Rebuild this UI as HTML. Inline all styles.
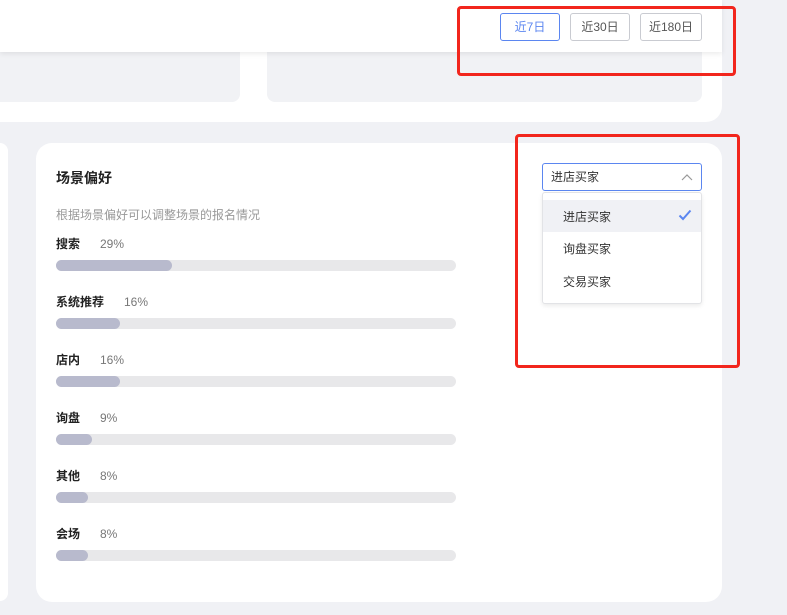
<!DOCTYPE html>
<html><head><meta charset="utf-8"><style>
*{margin:0;padding:0;box-sizing:border-box}
body{width:787px;height:615px;background:#f0f1f5;position:relative;overflow:hidden;font-family:"Liberation Sans","Noto Sans CJK SC",sans-serif;font-size:12px;color:#333}
.abs{position:absolute}
.card{background:#fff}
.btn{position:absolute;top:13px;height:28px;border:1px solid #c9cbd1;border-radius:3px;font-size:12px;line-height:26px;text-align:center;color:#555;background:#fff}
.lbl{position:absolute;left:56px;font-size:12px;font-weight:bold;color:#222;line-height:16px}
.pct{position:absolute;font-size:12px;color:#777;line-height:16px}
.track{position:absolute;left:56px;width:400px;height:11px;border-radius:6px;background:#e8e8ea}
.fill{height:11px;border-radius:6px;background:#b8bacd}
.red{position:absolute;border:3px solid #f2261d;border-radius:4px}
</style></head><body>
<div class="abs card" style="left:0;top:0;width:722px;height:122px;border-bottom-right-radius:16px"></div>
<div class="abs" style="left:0;top:40px;width:240px;height:62px;background:#f1f2f5;border-bottom-right-radius:8px"></div>
<div class="abs" style="left:267px;top:40px;width:435px;height:62px;background:#f1f2f5;border-radius:0 0 8px 8px"></div>
<div class="abs card" style="left:0;top:0;width:722px;height:52px;box-shadow:0 2px 5px rgba(0,0,0,.08)"></div>
<div class="btn" style="left:500px;width:60px;border-color:#5b86f0;color:#5b86f0">近7日</div>
<div class="btn" style="left:570px;width:60px">近30日</div>
<div class="btn" style="left:640px;width:62px">近180日</div>

<div class="abs card" style="left:0;top:143px;width:8px;height:458px;border-radius:0 12px 12px 0"></div>
<div class="abs card" style="left:36px;top:143px;width:686px;height:459px;border-radius:16px"></div>
<div class="abs" style="left:56px;top:168px;font-size:14px;font-weight:bold;color:#222">场景偏好</div>
<div class="abs" style="left:56px;top:206px;font-size:12px;color:#999">根据场景偏好可以调整场景的报名情况</div>

<div class="lbl" style="top:236px">搜索</div><div class="pct" style="left:100px;top:236px">29%</div>
<div class="track" style="top:260px"><div class="fill" style="width:116px"></div></div>
<div class="lbl" style="top:294px">系统推荐</div><div class="pct" style="left:124px;top:294px">16%</div>
<div class="track" style="top:318px"><div class="fill" style="width:64px"></div></div>
<div class="lbl" style="top:352px">店内</div><div class="pct" style="left:100px;top:352px">16%</div>
<div class="track" style="top:376px"><div class="fill" style="width:64px"></div></div>
<div class="lbl" style="top:410px">询盘</div><div class="pct" style="left:100px;top:410px">9%</div>
<div class="track" style="top:434px"><div class="fill" style="width:36px"></div></div>
<div class="lbl" style="top:468px">其他</div><div class="pct" style="left:100px;top:468px">8%</div>
<div class="track" style="top:492px"><div class="fill" style="width:32px"></div></div>
<div class="lbl" style="top:526px">会场</div><div class="pct" style="left:100px;top:526px">8%</div>
<div class="track" style="top:550px"><div class="fill" style="width:32px"></div></div>

<div class="abs" style="left:542px;top:163px;width:160px;height:28px;border:1px solid #5b86f0;border-radius:3px;background:#fff;line-height:26px;padding-left:8px;color:#333">进店买家
<svg class="abs" style="right:8px;top:9px" width="12" height="8" viewBox="0 0 12 8"><path d="M1 7L6 2L11 7" fill="none" stroke="#999" stroke-width="1.2"/></svg></div>
<div class="abs" style="left:542px;top:192px;width:160px;height:112px;background:#fff;border:1px solid #e2e3e6;border-radius:3px;box-shadow:0 2px 4px rgba(0,0,0,.08)"></div>
<div class="abs" style="left:543px;top:200px;width:158px;height:32px;background:#f0f1f5"></div>
<div class="abs" style="left:563px;top:208px">进店买家</div>
<svg class="abs" style="left:678px;top:209px" width="14" height="12" viewBox="0 0 14 12"><path d="M1.5 6.5L5 10L12.5 1.5" fill="none" stroke="#5b86f0" stroke-width="2"/></svg>
<div class="abs" style="left:563px;top:240px">询盘买家</div>
<div class="abs" style="left:563px;top:273px">交易买家</div>

<div class="red" style="left:457px;top:6px;width:279px;height:70px"></div>
<div class="red" style="left:515px;top:134px;width:225px;height:234px"></div>
</body></html>
